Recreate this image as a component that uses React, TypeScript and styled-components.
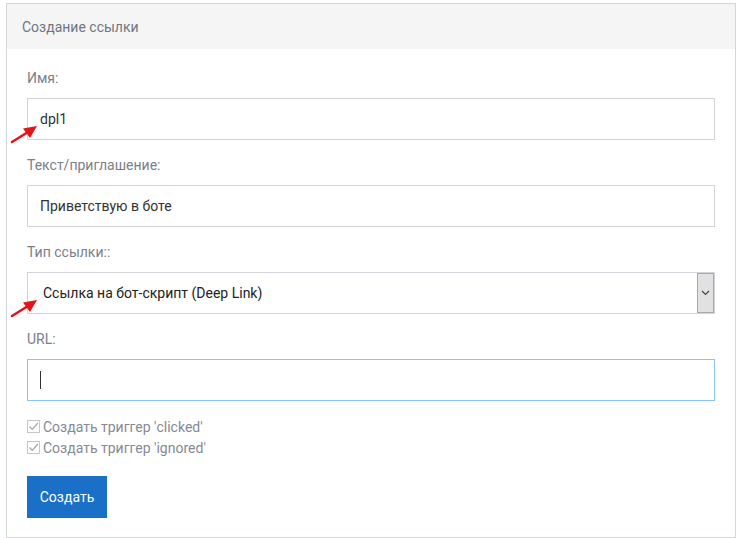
import React from 'react';
import styled, { createGlobalStyle } from 'styled-components';

const GlobalStyle = createGlobalStyle`
  html, body {
    margin: 0;
    padding: 0;
    background: #ffffff;
  }
  body {
    font-family: Roboto, 'Liberation Sans', Arial, sans-serif;
    font-size: 14px;
    color: #333333;
  }
`;

const Page = styled.div`
  position: relative;
  padding: 3px 2px 0 6px;
  width: 737px;
  box-sizing: border-box;
`;

const Panel = styled.div`
  width: 730px;
  box-sizing: border-box;
  border: 1px solid #d3d6da;
  background: #ffffff;
`;

const PanelHeading = styled.div`
  height: 45px;
  display: flex;
  align-items: center;
  padding: 0 15px;
  background: #f5f5f5;
  color: #6f7682;
  font-size: 14px;
`;

const PanelBody = styled.form`
  padding: 19px 20px 19px 20px;
  display: flex;
  flex-direction: column;
`;

const FormGroup = styled.div`
  display: flex;
  flex-direction: column;
  margin-bottom: 15px;

  &:last-of-type {
    margin-bottom: 14px;
  }
`;

const Label = styled.label`
  line-height: 20px;
  margin-bottom: 10px;
  color: #7b808a;
  font-size: 14px;
`;

const TextInput = styled.div<{ $focused?: boolean }>`
  height: 42px;
  box-sizing: border-box;
  border: 1px solid ${(p) => (p.$focused ? '#8cc4f5' : '#d1d4d8')};
  display: flex;
  align-items: center;
  padding: 0 12px;
  color: #333333;
  font-size: 14px;
`;

const Caret = styled.span`
  display: inline-block;
  width: 1px;
  height: 18px;
  background: #333333;
`;

const Select = styled.div`
  height: 42px;
  box-sizing: border-box;
  border: 1px solid #d1d4d8;
  display: flex;
  align-items: stretch;
  color: #222222;
  font-size: 14px;
`;

const SelectValue = styled.div`
  flex: 1;
  display: flex;
  align-items: center;
  padding-left: 15px;
`;

const SelectArrow = styled.div`
  width: 17px;
  box-sizing: border-box;
  border: 1px solid #a9a9a9;
  background: #e1e1e1;
  display: flex;
  align-items: center;
  justify-content: center;
`;

const Checks = styled.div`
  display: flex;
  flex-direction: column;
  margin-bottom: 18px;
`;

const CheckRow = styled.div`
  display: flex;
  align-items: center;
  height: 21px;
  gap: 3px;
  color: #858a93;
  font-size: 14px;
`;

const CheckBox = styled.span`
  width: 13px;
  height: 13px;
  box-sizing: border-box;
  border: 1px solid #c6c6c6;
  background: #ffffff;
  display: flex;
  align-items: center;
  justify-content: center;
`;

const SubmitButton = styled.button`
  align-self: flex-start;
  width: 80px;
  height: 42px;
  border: none;
  background: #1a6fc6;
  color: #ffffff;
  font-family: Roboto, 'Liberation Sans', Arial, sans-serif;
  font-size: 14px;
  padding: 0;
  cursor: pointer;
`;

const Arrow = styled.svg<{ $top: number }>`
  position: absolute;
  left: 10px;
  top: ${(p) => p.$top}px;
  width: 30px;
  height: 22px;
  pointer-events: none;
`;

function RedArrow({ top }: { top: number }) {
  return (
    <Arrow $top={top} viewBox="0 0 30 22">
      <line x1="2" y1="19" x2="18" y2="9" stroke="#e3151a" strokeWidth="2.6" strokeLinecap="round" />
      <polygon points="27,3 13,5.5 20,15" fill="#e3151a" />
    </Arrow>
  );
}

function Check({ label }: { label: string }) {
  return (
    <CheckRow>
      <CheckBox>
        <svg width="11" height="11" viewBox="0 0 11 11">
          <path d="M1.5 5.5 L4.3 8.3 L9.8 2" fill="none" stroke="#a3a3a3" strokeWidth="1.2" />
        </svg>
      </CheckBox>
      {label}
    </CheckRow>
  );
}

export default function App() {
  return (
    <>
      <GlobalStyle />
      <Page>
        <Panel>
          <PanelHeading>Создание ссылки</PanelHeading>
          <PanelBody onSubmit={(e) => e.preventDefault()}>
            <FormGroup>
              <Label>Имя:</Label>
              <TextInput>dpl1</TextInput>
            </FormGroup>
            <FormGroup>
              <Label>Текст/приглашение:</Label>
              <TextInput>Приветствую в боте</TextInput>
            </FormGroup>
            <FormGroup>
              <Label>Тип ссылки::</Label>
              <Select>
                <SelectValue>Ссылка на бот-скрипт (Deep Link)</SelectValue>
                <SelectArrow>
                  <svg width="9" height="6" viewBox="0 0 9 6">
                    <path d="M1 1 L4.5 4.5 L8 1" fill="none" stroke="#444" strokeWidth="1.2" />
                  </svg>
                </SelectArrow>
              </Select>
            </FormGroup>
            <FormGroup>
              <Label>URL:</Label>
              <TextInput $focused>
                <Caret />
              </TextInput>
            </FormGroup>
            <Checks>
              <Check label="Создать триггер 'clicked'" />
              <Check label="Создать триггер 'ignored'" />
            </Checks>
            <SubmitButton type="submit">Создать</SubmitButton>
          </PanelBody>
        </Panel>
        <RedArrow top={123} />
        <RedArrow top={297} />
      </Page>
    </>
  );
}
